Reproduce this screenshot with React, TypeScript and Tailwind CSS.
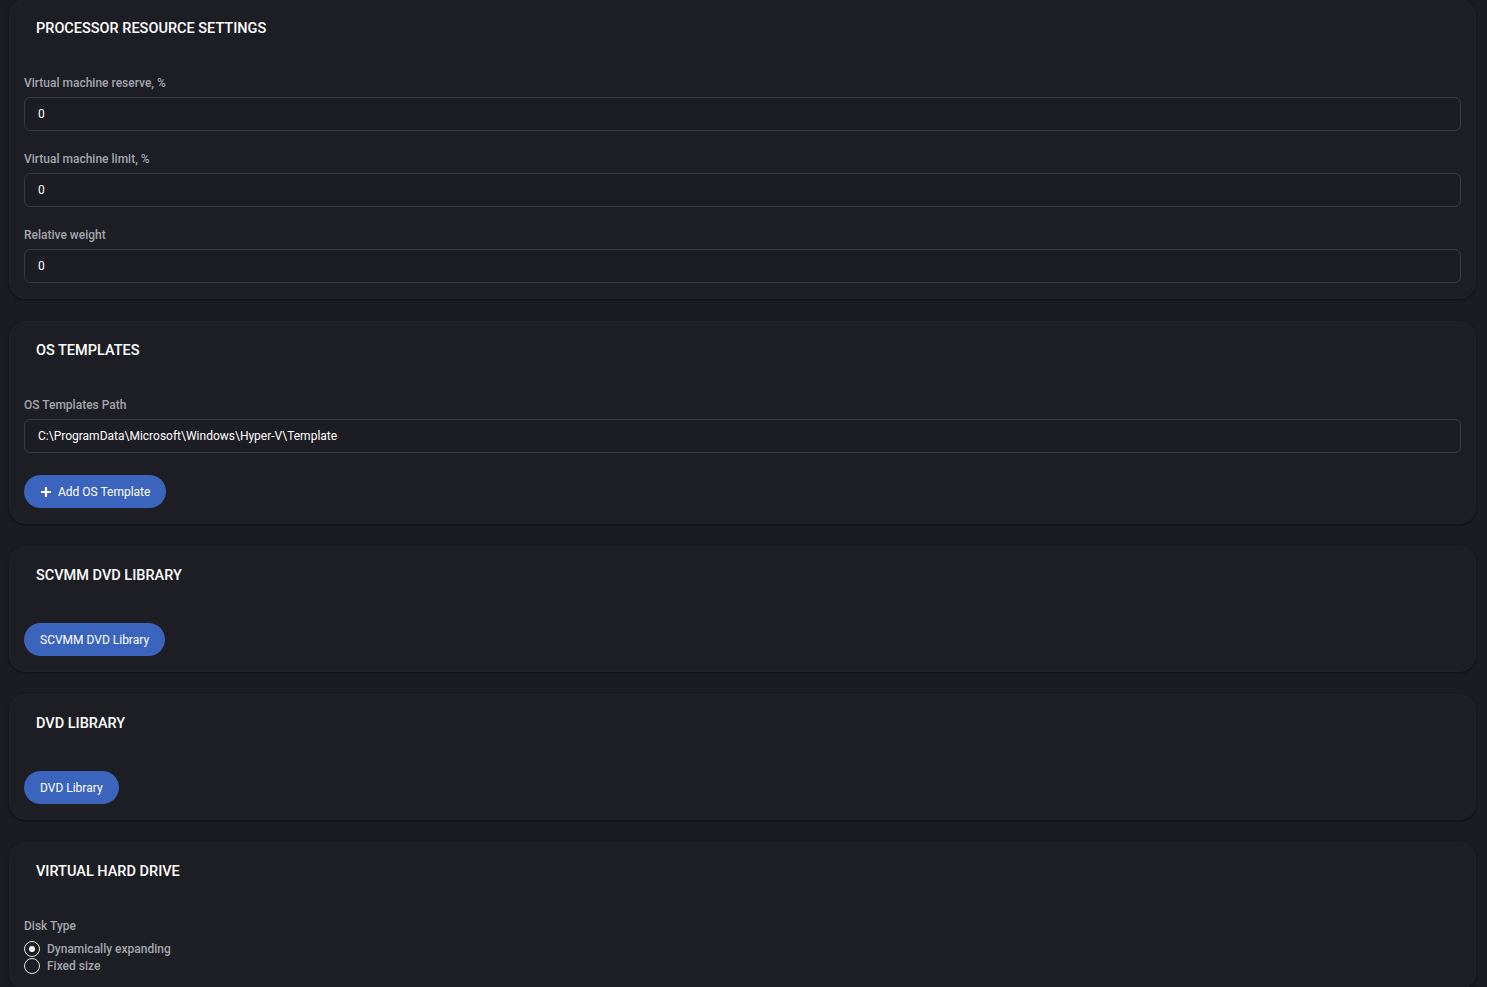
import React from "react";

const Card = ({ title, children }: { title: string; children: React.ReactNode }) => (
  <div className="rounded-2xl bg-[#1d1e24] shadow-[0_1px_3px_rgba(0,0,0,0.5)] border border-[#202128] px-[14px] pt-[19px] pb-[15px]">
    <div className="px-3 text-[14.5px] leading-[20px] font-medium text-white">{title}</div>
    <div className="mt-[37px]">{children}</div>
  </div>
);

const Field = ({ label, value }: { label: string; value: string }) => (
  <div>
    <div className="text-[12px] leading-[14px] font-medium text-[#a3a6ad]">{label}</div>
    <div className="mt-[7px] h-[34px] rounded-md border border-[#3a3c43] bg-[#1c1d22] flex items-center px-[13px] text-[12px] font-normal text-white">
      {value}
    </div>
  </div>
);

const Btn = ({ children }: { children: React.ReactNode }) => (
  <button className="h-[33px] rounded-full bg-[#3b64bd] px-4 flex items-center gap-[6px] text-[12px] font-normal text-white">
    {children}
  </button>
);

export default function App() {
  return (
    <div className="min-h-[987px] bg-[#1b1c21] pl-[9px] pr-[11px] pb-4 flex flex-col gap-[22px]" style={{ fontFamily: "Roboto, 'Liberation Sans', sans-serif" }}>
      <div className="-mt-[1px]">
        <Card title="PROCESSOR RESOURCE SETTINGS">
          <div className="flex flex-col gap-[21px]">
            <Field label="Virtual machine reserve, %" value="0" />
            <Field label="Virtual machine limit, %" value="0" />
            <Field label="Relative weight" value="0" />
          </div>
        </Card>
      </div>
      <Card title="OS TEMPLATES">
        <Field label="OS Templates Path" value="C:\ProgramData\Microsoft\Windows\Hyper-V\Template" />
        <div className="mt-[22px]">
          <Btn>
            <svg width="12" height="12" viewBox="0 0 12 12"><path d="M6 1v10M1 6h10" stroke="white" strokeWidth="2.2" /></svg>
            Add OS Template
          </Btn>
        </div>
      </Card>
      <Card title="SCVMM DVD LIBRARY">
        <Btn>SCVMM DVD Library</Btn>
      </Card>
      <Card title="DVD LIBRARY">
        <Btn>DVD Library</Btn>
      </Card>
      <Card title="VIRTUAL HARD DRIVE">
        <div className="text-[12px] leading-[14px] font-medium text-[#a3a6ad]">Disk Type</div>
        <div className="mt-[7px] flex flex-col gap-0">
          {["Dynamically expanding", "Fixed size"].map((t, i) => (
            <label key={t} className="flex items-center gap-[7px] h-[17px] text-[12px] font-medium text-[#a3a6ad]">
              <span className="w-[16px] h-[16px] rounded-full border-[1.5px] border-[#e5e5e5] flex items-center justify-center">
                {i === 0 && <span className="w-[6px] h-[6px] rounded-full bg-white" />}
              </span>
              {t}
            </label>
          ))}
        </div>
      </Card>
    </div>
  );
}
